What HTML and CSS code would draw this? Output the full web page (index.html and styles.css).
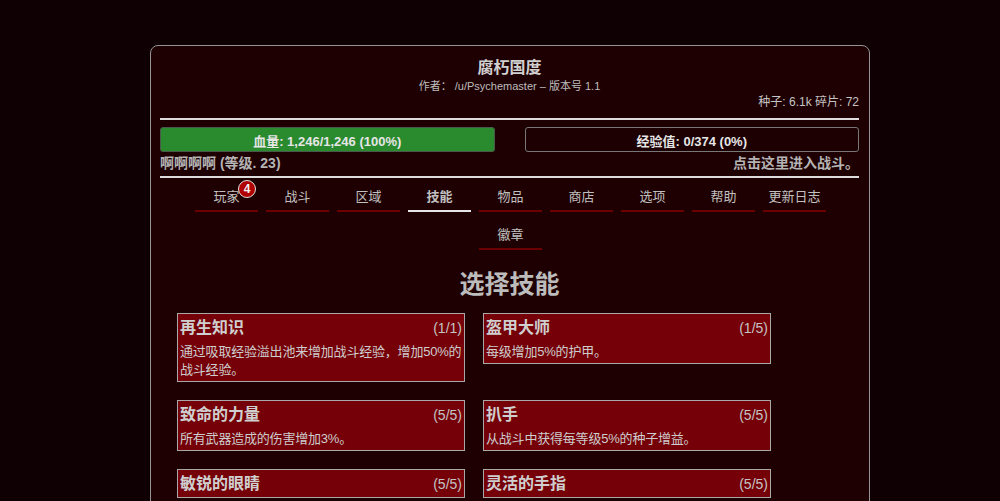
FILE: index.html
```html
<!DOCTYPE html>
<html lang="zh">
<head>
<meta charset="utf-8">
<title>腐朽国度</title>
<link rel="stylesheet" href="styles.css">
</head>
<body>
<div class="panel">
  <div class="title">腐朽国度</div>
  <div class="subtitle">作者： /u/Psychemaster – 版本号 1.1</div>
  <div class="resources">种子: 6.1k 碎片: 72</div>
  <div class="rule rule-top"></div>
  <div class="bars">
    <div class="bar bar-hp">血量: 1,246/1,246 (100%)</div>
    <div class="bar bar-xp">经验值: 0/374 (0%)</div>
  </div>
  <div class="status">
    <span>啊啊啊啊 (等级. 23)</span>
    <span>点击这里进入战斗。</span>
  </div>
  <div class="rule rule-bottom"></div>
  <nav class="tabs">
    <div class="tab">玩家<span class="badge">4</span></div>
    <div class="tab">战斗</div>
    <div class="tab">区域</div>
    <div class="tab active">技能</div>
    <div class="tab">物品</div>
    <div class="tab">商店</div>
    <div class="tab">选项</div>
    <div class="tab">帮助</div>
    <div class="tab">更新日志</div>
    <div class="tab">徽章</div>
  </nav>
  <h1 class="heading">选择技能</h1>
  <div class="skills">
    <div class="skill">
      <div class="skill-head"><span class="skill-name">再生知识</span><span class="skill-level">(1/1)</span></div>
      <div class="skill-desc">通过吸取经验溢出池来增加战斗经验，增加50%的战斗经验。</div>
    </div>
    <div class="skill">
      <div class="skill-head"><span class="skill-name">盔甲大师</span><span class="skill-level">(1/5)</span></div>
      <div class="skill-desc">每级增加5%的护甲。</div>
    </div>
    <div class="skill">
      <div class="skill-head"><span class="skill-name">致命的力量</span><span class="skill-level">(5/5)</span></div>
      <div class="skill-desc">所有武器造成的伤害增加3%。</div>
    </div>
    <div class="skill">
      <div class="skill-head"><span class="skill-name">扒手</span><span class="skill-level">(5/5)</span></div>
      <div class="skill-desc">从战斗中获得每等级5%的种子增益。</div>
    </div>
    <div class="skill">
      <div class="skill-head"><span class="skill-name">敏锐的眼睛</span><span class="skill-level">(5/5)</span></div>
    </div>
    <div class="skill">
      <div class="skill-head"><span class="skill-name">灵活的手指</span><span class="skill-level">(5/5)</span></div>
    </div>
  </div>
</div>
</body>
</html>
```

FILE: styles.css
```css
html, body {
  margin: 0;
  padding: 0;
  background: #0e0003;
  height: 100%;
  overflow: hidden;
}
body {
  font-family: "Liberation Sans", "Noto Sans CJK SC", sans-serif;
  color: #c4c4c4;
}
.panel {
  box-sizing: border-box;
  width: 720px;
  margin: 45px 0 0 150px;
  padding: 11px 10px 20px 9px;
  border: 1px solid #949494;
  border-radius: 8px;
  background: #1f0002;
  min-height: 600px;
}
.title {
  text-align: center;
  font-size: 16px;
  font-weight: bold;
  line-height: 22px;
  color: #cfcfcf;
}
.subtitle {
  text-align: center;
  font-size: 11px;
  line-height: 14px;
  margin-top: 0;
  color: #bdbdbd;
}
.resources {
  text-align: right;
  font-size: 12px;
  line-height: 16px;
  margin-top: 1px;
  color: #c4c4c4;
}
.rule {
  height: 2px;
  background: #dcdcdc;
}
.rule-top {
  margin-top: 8px;
}
.bars {
  display: flex;
  gap: 30px;
  margin-top: 7px;
}
.bar {
  flex: 1;
  box-sizing: border-box;
  height: 25px;
  padding-top: 5px;
  border-radius: 3px;
  text-align: center;
  font-size: 13px;
  font-weight: bold;
  line-height: 18px;
  color: #e6e6e6;
}
.bar-hp {
  background: #2a8a2e;
  border: 1px solid #4a5a4a;
}
.bar-xp {
  background: #1c0002;
  border: 1px solid #777;
}
.status {
  display: flex;
  justify-content: space-between;
  margin-top: 2px;
  font-size: 14px;
  font-weight: bold;
  line-height: 18px;
  color: #b4b4b4;
}
.rule-bottom {
  margin-top: 4px;
}
.tabs {
  display: flex;
  flex-wrap: wrap;
  justify-content: center;
  column-gap: 8px;
  row-gap: 9px;
  margin: 5px 29px 0 31px;
}
.tab {
  position: relative;
  width: 63px;
  padding: 5px 0 4px;
  border-bottom: 2px solid #6b0000;
  text-align: center;
  font-size: 13px;
  line-height: 18px;
  color: #c0c0c0;
}
.tab.active {
  border-bottom-color: #e6e6e6;
  font-weight: bold;
}
.badge {
  position: absolute;
  top: -3px;
  left: 43px;
  width: 16px;
  height: 16px;
  border: 1.5px solid #e0e0e0;
  border-radius: 50%;
  background: #b00000;
  color: #f2f2f2;
  font-size: 12px;
  font-weight: bold;
  line-height: 16px;
  text-align: center;
}
.heading {
  margin: 19px 0 0;
  text-align: center;
  font-size: 25px;
  font-weight: bold;
  line-height: 30px;
  color: #bcbcbc;
}
.skills {
  display: grid;
  grid-template-columns: 288px 288px;
  column-gap: 18px;
  row-gap: 18px;
  align-items: start;
  margin: 14px 0 0 17px;
}
.skill {
  box-sizing: border-box;
  border: 1px solid #a8a8a8;
  background: #760007;
  padding: 3px 2px 2px 2px;
}
.skill-head {
  display: flex;
  justify-content: space-between;
  align-items: baseline;
  line-height: 22px;
}
.skill-name {
  font-size: 16px;
  font-weight: bold;
  color: #cfcfcf;
}
.skill-level {
  font-size: 14px;
  color: #c4c4c4;
}
.skill-desc {
  margin-top: 4px;
  font-size: 13px;
  line-height: 18px;
  letter-spacing: -0.2px;
  color: #cdcdcd;
}
```
